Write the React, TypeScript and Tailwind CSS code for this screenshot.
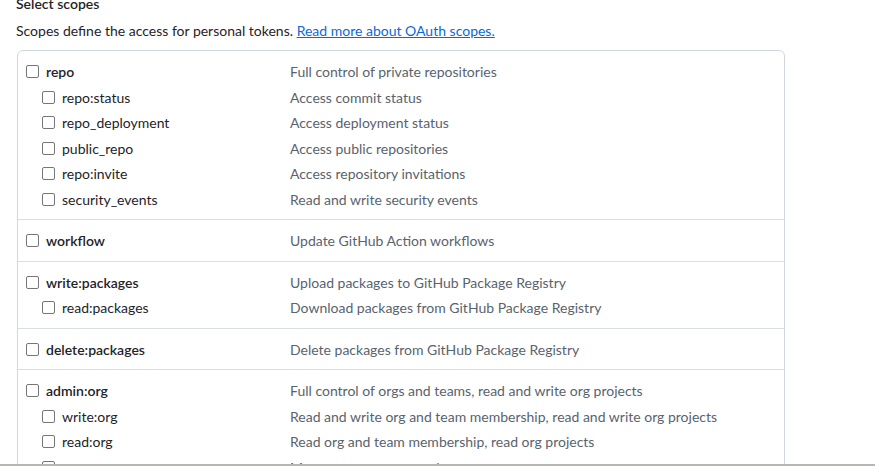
import React from "react";

type Scope = { name: string; desc: string; children?: Scope[] };

const groups: Scope[] = [
  {
    name: "repo",
    desc: "Full control of private repositories",
    children: [
      { name: "repo:status", desc: "Access commit status" },
      { name: "repo_deployment", desc: "Access deployment status" },
      { name: "public_repo", desc: "Access public repositories" },
      { name: "repo:invite", desc: "Access repository invitations" },
      { name: "security_events", desc: "Read and write security events" },
    ],
  },
  { name: "workflow", desc: "Update GitHub Action workflows" },
  {
    name: "write:packages",
    desc: "Upload packages to GitHub Package Registry",
    children: [{ name: "read:packages", desc: "Download packages from GitHub Package Registry" }],
  },
  { name: "delete:packages", desc: "Delete packages from GitHub Package Registry" },
  {
    name: "admin:org",
    desc: "Full control of orgs and teams, read and write org projects",
    children: [
      { name: "write:org", desc: "Read and write org and team membership, read and write org projects" },
      { name: "read:org", desc: "Read org and team membership, read org projects" },
      { name: "manage_runners:org", desc: "Manage org runners and runner groups" },
    ],
  },
];

function Box() {
  return <span className="h-[13px] w-[13px] shrink-0 rounded-[2px] border border-[#767676] bg-white" />;
}

function Row({ scope, sub = false }: { scope: Scope; sub?: boolean }) {
  return (
    <div className="flex h-[25.5px] items-center">
      <label className={`flex w-[272px] items-center gap-[7px] ${sub ? "pl-6" : "pl-2"}`}>
        <Box />
        <span className={sub ? "text-[#1f2328]" : "font-semibold text-[#1f2328]"}>{scope.name}</span>
      </label>
      <span className="text-[#59636e]">{scope.desc}</span>
    </div>
  );
}

export default function App() {
  return (
    <div
      className="h-[466px] overflow-hidden bg-white pl-4 text-[14px]"
      style={{ fontFamily: "Lato, sans-serif" }}
    >
      <h3 className="-mt-[6px] h-5 font-semibold leading-5 text-[#1f2328]">Select scopes</h3>
      <p className="mt-[7px] leading-5 text-[#1f2328]">
        Scopes define the access for personal tokens.{" "}
        <a href="#" className="text-[#0969da] underline">
          Read more about OAuth scopes.
        </a>
      </p>
      <div className="ml-px mt-[9px] w-[768px] rounded-md border border-[#d0d7de]">
        {groups.map((g, i) => (
          <div key={g.name} className={`pt-2 pb-[7px] ${i > 0 ? "border-t border-[#d8dee4]" : ""}`}>
            <Row scope={g} />
            {g.children?.map((c) => <Row key={c.name} scope={c} sub />)}
          </div>
        ))}
      </div>
      <div className="fixed inset-x-0 bottom-0 h-[2px] bg-[#b3b9ae]" />
    </div>
  );
}
